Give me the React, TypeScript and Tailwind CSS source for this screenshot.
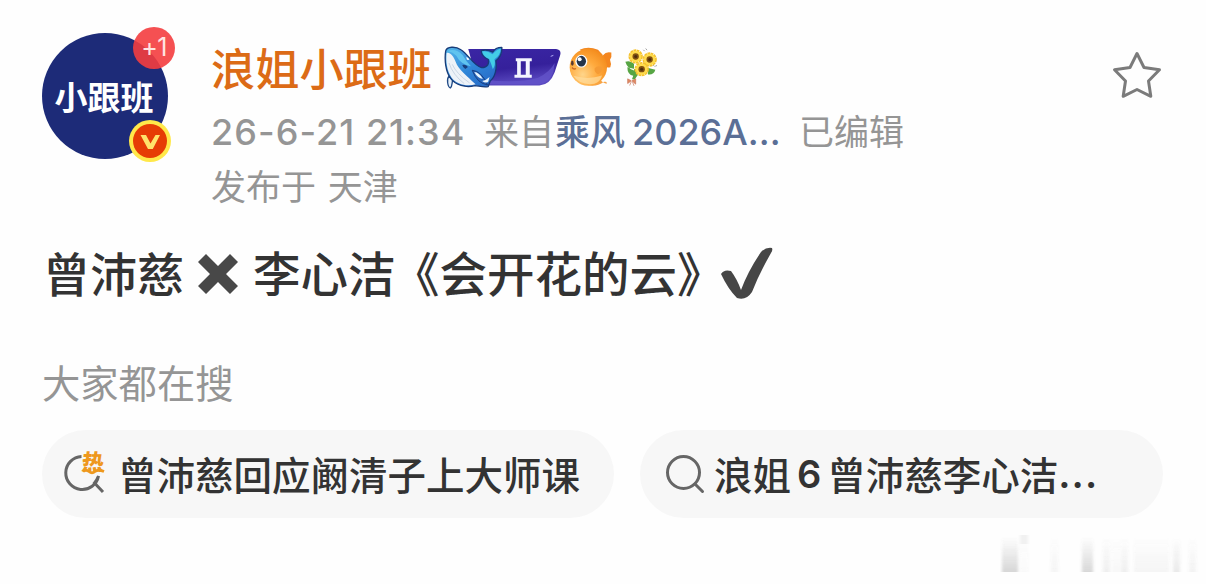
import React from "react";

const cjk = "font-['Noto_Sans_CJK_SC',sans-serif]";
const latin = "font-['Inter',sans-serif]";

const Avatar: React.FC = () => (
  <div className="relative mt-[33px] flex h-[126px] w-[126px] shrink-0 items-center justify-center rounded-full bg-[#1d2b78]">
    <span className="-ml-[2px] whitespace-nowrap text-[33px] leading-none font-bold text-white">小跟班</span>
    <span className="absolute -top-[6px] -right-[7px] flex h-[42px] w-[42px] items-center justify-center rounded-full bg-[#f43d3f]/90 font-['Inter',sans-serif] text-[25px] tracking-tight text-[#ffe4e2]">
      +1
    </span>
    <span className="absolute -right-[3px] -bottom-[3px] flex h-[42px] w-[42px] items-center justify-center rounded-full bg-[#ffe84a]">
      <svg viewBox="0 0 34 34" className="h-[34px] w-[34px]">
        <circle cx="17" cy="17" r="17" fill="#e63c05" />
        <path d="M7.500 11h5.500l4.500 8.500L22.500 11H27L19.800 25h-4.800z" fill="#ffe36b" />
      </svg>
    </span>
  </div>
);

const WhaleBadge: React.FC = () => (
  <svg viewBox="27 30 352 135" className="h-[45px] w-[117px]">
    <defs>
      <linearGradient id="plate" x1="0" y1="0" x2="0.3" y2="1">
        <stop offset="0" stopColor="#3a26a4" />
        <stop offset="0.6" stopColor="#35209b" />
        <stop offset="1" stopColor="#5a49c0" />
      </linearGradient>
      <linearGradient id="whale" x1="0" y1="0" x2="1" y2="1">
        <stop offset="0" stopColor="#55b8ea" />
        <stop offset="0.5" stopColor="#2f85d8" />
        <stop offset="1" stopColor="#2460c0" />
      </linearGradient>
    </defs>
    <path d="M100 42H364Q382 44 376 62L360 112Q346 150 314 152H130Z" fill="url(#plate)" />
    <path d="M150 134Q250 146 310 128Q345 112 360 84L356 112Q342 146 314 148H150Z" fill="#6354c9" opacity="0.8" />
    <path d="M348 64l8-3" stroke="#b4a9f5" strokeWidth="3" />
    <path
      d="M243 70H291V79H285V119H291V128H239V119H247V79H243ZM258 79V119H273V79Z"
      fill="#f4f5ff"
      fillRule="evenodd"
    />
    <path d="M42 124C34 132 38 156 46 159C53 154 50 142 54 132Z" fill="#e7f2fb" stroke="#214a86" strokeWidth="4" />
    <path
      d="M32 48C35 34 62 33 78 44C100 58 116 92 140 98C160 98 163 84 160 73C148 68 139 58 139 47C152 42 164 46 174 51C179 41 190 37 201 37C202 56 195 69 183 77C187 102 180 128 166 138L160 155C146 158 132 153 120 152C92 160 62 150 47 130C32 110 28 75 32 48Z"
      fill="url(#whale)"
      stroke="#173b78"
      strokeWidth="4"
      strokeLinejoin="round"
    />
    <path d="M142 49Q158 46 173 58Q184 43 198 40Q197 60 179 73Q183 90 174 103Q169 86 163 72Q146 65 142 49Z" fill="#43cee7" />
    <path d="M35 54C44 50 55 62 62 80C70 104 98 124 122 148C94 156 64 147 50 128C36 108 32 80 35 54Z" fill="#edf2f8" />
    <path d="M42 84Q54 120 88 146M52 88Q64 116 104 144" fill="none" stroke="#c3d0e0" strokeWidth="2.500" />
    <path d="M38 48Q62 38 83 60Q94 80 108 94Q76 87 64 62Q54 51 38 48Z" fill="#60c4ef" />
    <path d="M82 90Q92 87 99 96L91 102Q84 98 82 90Z" fill="#173d7c" />
    <path d="M94 66q8 2 9 9l-7-1z" fill="#fff" />
    <path d="M112 106Q140 108 158 150Q126 145 112 106Z" fill="#2867bd" stroke="#183e82" strokeWidth="3" />
    <path d="M118 111Q133 112 144 132Q128 130 118 111Z" fill="#e8f5fd" />
    <path d="M142 138Q154 136 164 126L160 140Q152 146 142 138Z" fill="#e8f5fd" />
  </svg>
);

const FishBadge: React.FC = () => (
  <svg viewBox="400 35 135 125" className="h-[42px] w-[45px]">
    <defs>
      <radialGradient id="fish" cx="0.35" cy="0.7" r="0.8">
        <stop offset="0" stopColor="#ffd58a" />
        <stop offset="0.5" stopColor="#ffaa3d" />
        <stop offset="1" stopColor="#f28718" />
      </radialGradient>
    </defs>
    <path d="M505 62Q514 50 530 54Q532 68 526 76Q531 88 527 98Q515 102 506 92Z" fill="#f4861f" />
    <path d="M435 46Q460 34 490 46L505 62L470 66Z" fill="#f18420" />
    <path d="M448 148Q480 162 508 142Q518 140 516 148Q506 146 492 132Z" fill="#f7a344" />
    <ellipse cx="461" cy="98" rx="56" ry="56" fill="url(#fish)" />
    <path d="M416 124Q436 154 479 148Q498 141 502 123Q461 137 416 124Z" fill="#ffe0a5" opacity="0.65" />
    <path d="M480 101Q489 91 502 98Q505 112 490 119Q478 113 480 101Z" fill="#f59b35" />
    <ellipse cx="440" cy="80" rx="18" ry="19" fill="#fff" />
    <ellipse cx="440" cy="80" rx="14" ry="16" fill="#26354a" />
    <circle cx="435" cy="74" r="6" fill="#fff" />
    <ellipse cx="413" cy="86" rx="4" ry="8" fill="#5a3a30" />
    <path d="M412 99q5 7 12 3" fill="none" stroke="#cf6a22" strokeWidth="4" />
  </svg>
);

const flowers = [
  { x: 605, y: 66 },
  { x: 647, y: 75 },
  { x: 623, y: 104 },
];

const FlowerBadge: React.FC = () => (
  <svg viewBox="570 35 105 125" className="h-[42px] w-[35px]">
    <path
      d="M574 82Q588 76 600 88L600 108Q580 102 574 82ZM580 98Q580 120 598 124L612 106ZM640 100L664 106Q660 122 642 120ZM602 112l-8 22 8 1 12-17z"
      fill="#57a544"
    />
    {flowers.map((f, i) => (
      <g key={i} transform={`translate(${f.x} ${f.y})`}>
        <circle r="18" fill="none" stroke="#f5c22c" strokeWidth="7" strokeDasharray="8 1.500" />
        <circle r="17" fill="#ffdb4c" />
        <circle r="9.500" fill="#80500f" />
        <circle r="4.500" fill="#4b2d10" />
      </g>
    ))}
    <path d="M592 139L581 133V147ZM594 139L605 133V149ZM592 141l-5 12M595 141l5 13" fill="#e18a62" stroke="#c9765a" strokeWidth="2" />
    <path d="M628 46l4 4M635 42l4 5M658 92l4 4M664 95l5-2" stroke="#777" strokeWidth="2" />
  </svg>
);

const SearchIcon: React.FC<{ hot?: boolean }> = ({ hot }) => (
  <span className="relative flex h-[40px] w-[40px] shrink-0">
    <svg viewBox="0 0 40 40" className="h-[40px] w-[40px] overflow-visible" fill="none" stroke="#666" strokeWidth="3">
      {hot ? (
        <>
          <path d="M16.500 2.500A16.500 16.500 0 1 0 33.500 22Q32 26 29.500 29L38 38" />
          <path d="M18 17.500q3-2.500 6 0t6 0 9 0" stroke="#ee981d" strokeWidth="2.800" />
        </>
      ) : (
        <>
          <circle cx="18.500" cy="18.500" r="16" />
          <path d="M30 30l7.500 7.500" strokeLinecap="round" />
        </>
      )}
    </svg>
    {hot && (
      <span className="absolute -top-[6px] left-[17px] -skew-x-6 text-[22px] leading-[24px] font-black text-[#ee981d]">
        热
      </span>
    )}
  </span>
);

const watermark = [
  { x: 2, w: 16, o: 0.26 },
  { x: 20, w: 8, o: 0.03 },
  { x: 51, w: 7, o: 0.06 },
  { x: 82, w: 11, o: 0.25 },
  { x: 103, w: 7, o: 0.1 },
  { x: 112, w: 8, o: 0.04 },
  { x: 121, w: 7, o: 0.1 },
  { x: 134, w: 35, o: 0.06 },
  { x: 173, w: 7, o: 0.13 },
  { x: 189, w: 7, o: 0.07 },
];

const App: React.FC = () => {
  return (
    <div className={`flex h-[584px] w-[1206px] flex-col overflow-hidden bg-[#fefefe] ${cjk}`}>
      {/* Author */}
      <div className="flex h-[214px] shrink-0 pl-[42px]">
        <Avatar />
        <div className="flex flex-col pt-[37px] pl-[43px]">
          <div className="flex h-[60px] items-center whitespace-nowrap">
            <span className="w-[233px] text-[44.200px] leading-[60px] font-medium text-[#dc6b16]">浪姐小跟班</span>
            <WhaleBadge />
            <span className="ml-[7px] flex">
              <FishBadge />
            </span>
            <span className="ml-[11px] flex">
              <FlowerBadge />
            </span>
          </div>
          <div className="flex h-[66px] items-center text-[35px] leading-[54px] whitespace-nowrap text-[#959595]">
            <span className={`w-[273px] pt-[3px] text-[36px] font-medium tracking-[1.050px] ${latin}`}>26-6-21 21:34</span>
            <span className="w-[71px]">来自</span>
            <span className="w-[77px] font-medium text-[#5b6f96]">乘风</span>
            <span className={`w-[167px] pt-[3px] text-[36px] font-medium text-[#5b6f96] ${latin}`}>2026A...</span>
            <span>已编辑</span>
          </div>
          <div className="flex h-[44px] items-center text-[35px] leading-[44px] [word-spacing:4px] text-[#959595]">发布于 天津</div>
        </div>
        <svg viewBox="0 0 50 48" className="mt-[51px] ml-auto mr-[44px] h-[48px] w-[50px]">
          <path
            d="M25 2.500L32 16.500L47.500 18.800L36.500 30L38.800 45.300L25 38.500L11.200 45.300L13.500 30L2.500 18.800L18 16.500Z"
            fill="none"
            stroke="#7b7b7b"
            strokeWidth="3"
            strokeLinejoin="round"
          />
        </svg>
      </div>

      {/* Post text */}
      <div className="mt-[28px] flex h-[60px] shrink-0 items-center pl-[43px] text-[47.500px] leading-[60px] font-medium whitespace-nowrap text-[#333]">
        <span className="w-[155px] text-[47px]">曾沛慈</span>
        <svg viewBox="0 0 40 40" className="mt-[4px] h-[40px] w-[40px]">
          <path d="M0 8L8 0L20 12L32 0L40 8L28 20L40 32L32 40L20 28L8 40L0 32L12 20Z" fill="#484848" />
        </svg>
        <span className="ml-[15px] w-[143px]">李心洁</span>
        <span className="-ml-[4px] w-[328px]">《会开花的云》</span>
        <svg viewBox="0 0 54 54" className="mt-[4px] h-[54px] w-[54px]">
          <path
            d="M1 27Q4 22 11 24Q17 32 21 43Q28 24 41 5Q46 0 52 1Q53 3 51 6Q39 27 32 45Q26 54 17 51Q8 42 1 27Z"
            fill="#464646"
          />
        </svg>
      </div>

      {/* Related searches */}
      <div className="mt-[52px] flex h-[56px] shrink-0 items-center pl-[42px] text-[38.300px] leading-[56px] text-[#959595]">
        大家都在搜
      </div>
      <div className="mt-[20px] flex h-[88px] shrink-0 gap-[26px] pl-[42px] text-[38.500px] leading-[56px] font-medium whitespace-nowrap text-[#333]">
        <div className="flex w-[572px] items-center rounded-full bg-[#f7f7f7] pl-[23px]">
          <SearchIcon hot />
          <span className="ml-[13px] pb-[3px]">曾沛慈回应阚清子上大师课</span>
        </div>
        <div className="flex w-[523px] items-center rounded-full bg-[#f7f7f7] pl-[25px]">
          <SearchIcon />
          <span className="ml-[9px] pb-[3px]">浪姐</span>
          <span className={`mx-[6px] text-[38px] font-semibold ${latin}`}>6</span>
          <span className="pb-[3px]">曾沛慈李心洁</span>
          <span className={`font-semibold tracking-[1px] ${latin}`}>...</span>
        </div>
      </div>

      <svg viewBox="0 0 200 38" className="mt-[17px] mr-[6px] h-[38px] w-[200px] shrink-0 self-end">
        <defs>
          <linearGradient id="fade" x1="0" y1="0" x2="0" y2="1">
            <stop offset="0" stopColor="#666" stopOpacity="0" />
            <stop offset="1" stopColor="#666" />
          </linearGradient>
          <filter id="soft" x="-10%" y="-10%" width="120%" height="120%">
            <feGaussianBlur stdDeviation="1.500 0" />
          </filter>
        </defs>
        <g filter="url(#soft)">
          {watermark.map((bar) => (
            <rect key={bar.x} x={bar.x} y="2" width={bar.w} height="35" fill="url(#fade)" opacity={bar.o} />
          ))}
          <rect x="20" y="0" width="8" height="9" fill="#f1f1f1" />
        </g>
      </svg>
    </div>
  );
};

export default App;
